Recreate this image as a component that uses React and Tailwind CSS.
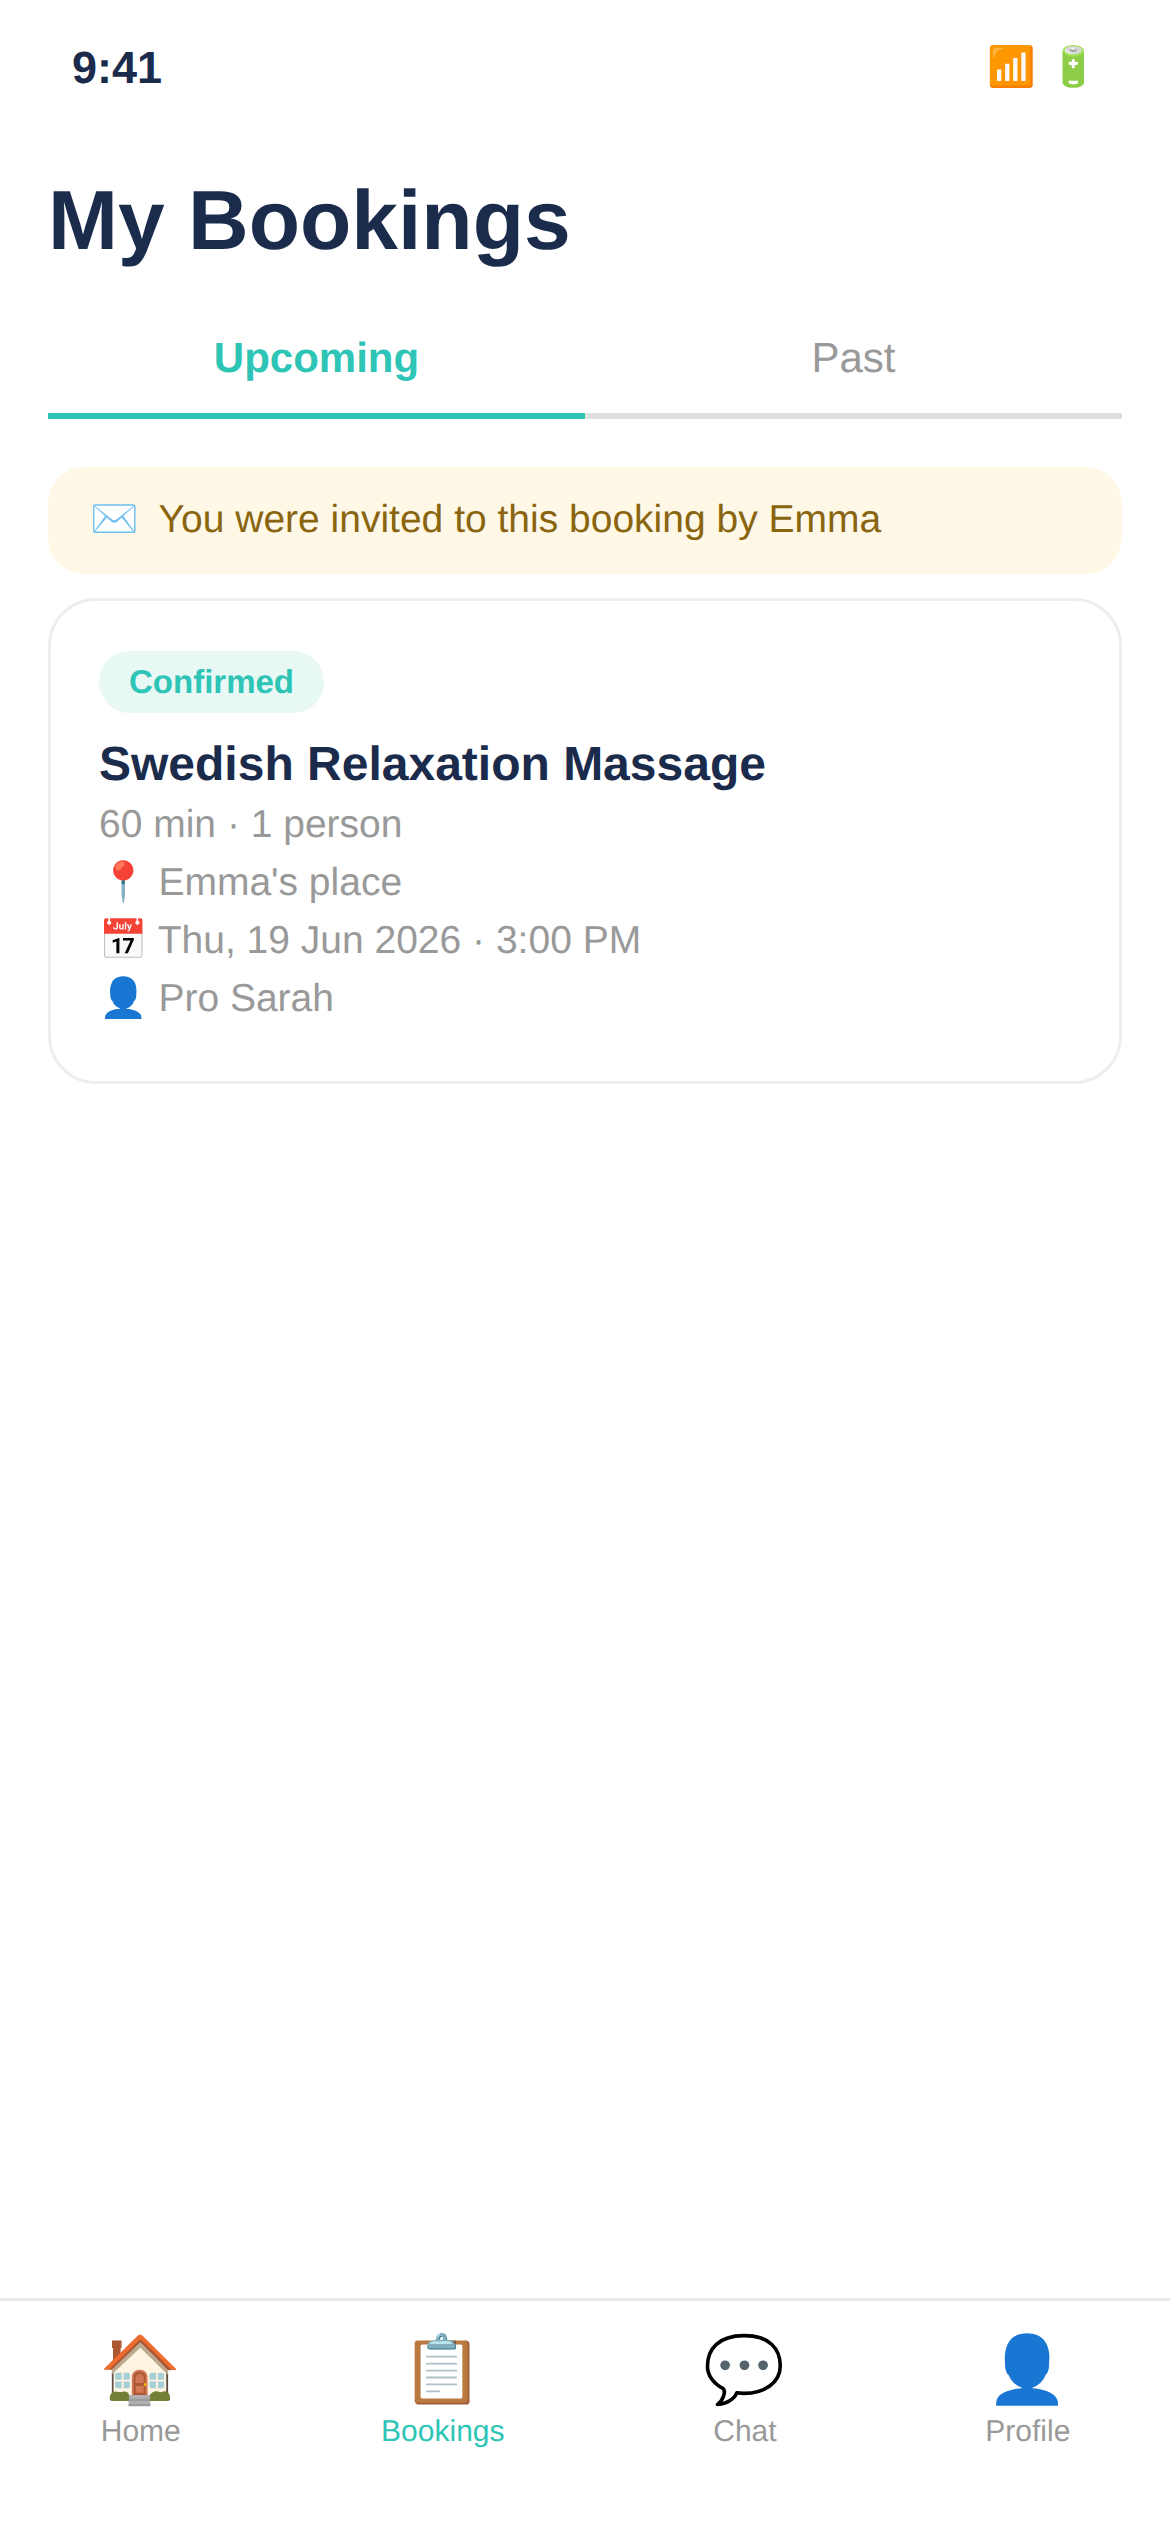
const tabs = [
  { icon: '🏠', label: 'Home' },
  { icon: '📋', label: 'Bookings', active: true },
  { icon: '💬', label: 'Chat' },
  { icon: '👤', label: 'Profile' },
]

const App = () => {
  return (
    <div className="h-[2532px] bg-white flex flex-col font-['Liberation_Sans',Arial,sans-serif] [text-rendering:geometricPrecision]">
      <div className="flex justify-between items-center h-[136px] px-[72px]">
        <span className="text-[45px] font-bold text-[#1a2b4c]">9:41</span>
        <div className="flex gap-[14px] text-[39px]">
          <span>📶</span>
          <span>🔋</span>
        </div>
      </div>
      <div className="px-12 flex-1">
        <h1 className="text-[84px] font-bold text-[#1a2b4c] mt-[36px] leading-[96px]">My Bookings</h1>
        <div className="flex mt-[58px]">
          <div className="flex-1 text-center text-[42px] font-bold text-[#2ec4b6] pb-6 border-b-[6px] border-[#2ec4b6]">Upcoming</div>
          <div className="flex-1 text-center text-[42px] text-[#999999] pb-6 border-b-[6px] border-[#e0e0e0]">Past</div>
        </div>
        <div className="mt-12 bg-[#fff8e7] rounded-[36px] h-[107px] px-[42px] flex items-center gap-5 text-[#8a6510] text-[39px]">
          <span>✉️</span>
          <span>You were invited to this booking by Emma</span>
        </div>
        <div className="mt-6 border-[3px] border-[#eeeeee] rounded-[48px] pt-[50px] px-12 pb-[53px]">
          <span className="block w-fit bg-[#e8f8f5] text-[#2ec4b6] text-[33px] font-bold rounded-full px-[30px] py-[12px] leading-[38px]">Confirmed</span>
          <h2 className="text-[48px] font-bold text-[#1a2b4c] mt-[20px] leading-[63px]">Swedish Relaxation Massage</h2>
          <div className="text-[39px] text-[#999999] leading-[58px]">
            <p>60 min · 1 person</p>
            <p>📍 Emma's place</p>
            <p>📅 Thu, 19 Jun 2026 · 3:00 PM</p>
            <p>👤 Pro Sarah</p>
          </div>
        </div>
      </div>
      <div className="h-[234px] border-t-[3px] border-[#e8e8e8] flex justify-around pt-[28px]">
        {tabs.map((tab) => (
          <div key={tab.label} className="flex flex-col items-center">
            <span className="text-[66px] leading-[80px]">{tab.icon}</span>
            <span className={tab.active ? 'text-[30px] text-[#2ec4b6]' : 'text-[30px] text-[#999999]'}>{tab.label}</span>
          </div>
        ))}
      </div>
    </div>
  )
}

export default App
